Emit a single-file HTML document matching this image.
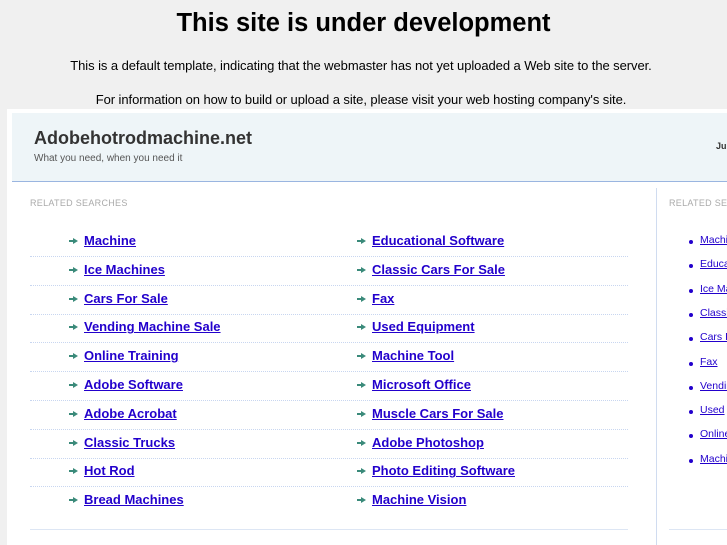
<!DOCTYPE html>
<html><head><meta charset="utf-8"><style>
html,body{margin:0;width:727px;height:545px;overflow:hidden}
body{background:#f0f0f0;font-family:"Liberation Sans",sans-serif;position:relative}
#wrap{position:absolute;left:0;top:0;width:727px;height:545px;overflow:hidden}
.a{position:absolute;white-space:nowrap}
h1{position:absolute;top:7px;left:0;width:727px;text-align:center;margin:0;font-size:25.5px;line-height:32px;color:#000}
.p{left:0;width:722px;text-align:center;font-size:13px;color:#000;letter-spacing:-0.07px}
#panel{position:absolute;left:7px;top:109px;width:720px;height:436px;background:#fff}
#hdr{position:absolute;left:12px;top:113px;width:715px;height:68px;background:#eef5f8;border-bottom:1px solid #9ab5e0}
.lab{font-size:9px;color:#aaa;letter-spacing:.3px}
.l{font-size:13px;font-weight:bold;color:#2200cc;text-decoration:underline}
.ar{width:0;height:0;border-left:5px solid #3a8a7a;border-top:3px solid transparent;border-bottom:3px solid transparent}
.ar:before{content:"";position:absolute;left:-9px;top:-1px;width:4px;height:2px;background:#3a8a7a}
.dot{position:absolute;left:30px;width:598px;border-top:1px dotted #c8d6f0;height:0}
.s{font-size:10.5px;color:#2200cc;text-decoration:underline}
.b{width:4px;height:4px;border-radius:2px;background:#2200cc}
</style></head><body><div id="wrap">
<h1>This site is under development</h1>
<div class="a p" style="top:58px">This is a default template, indicating that the webmaster has not yet uploaded a Web site to the server.</div>
<div class="a p" style="top:92px">For information on how to build or upload a site, please visit your web hosting company's site.</div>
<div id="panel"></div>
<div id="hdr"></div>
<div class="a" style="left:34px;top:128px;font-size:18px;font-weight:bold;color:#333">Adobehotrodmachine.net</div>
<div class="a" style="left:34px;top:153px;font-size:10px;color:#555">What you need, when you need it</div>
<div class="a" style="left:716px;top:141px;font-size:9px;font-weight:bold;color:#333">Ju</div>
<div class="a lab" style="left:30px;top:198px">RELATED SEARCHES</div>
<div class="a lab" style="left:669px;top:198px">RELATED SEARCHES</div>
<div class="a" style="left:656px;top:188px;width:1px;height:357px;background:#d0dcf0"></div>
<div class="a" style="left:30px;top:529px;width:598px;height:1px;background:#dde6f4"></div>
<div class="a" style="left:669px;top:529px;width:58px;height:1px;background:#dde6f4"></div>
<div id="rows"></div>
</div>
<script>
var L=["Machine","Ice Machines","Cars For Sale","Vending Machine Sale","Online Training","Adobe Software","Adobe Acrobat","Classic Trucks","Hot Rod","Bread Machines"];
var R=["Educational Software","Classic Cars For Sale","Fax","Used Equipment","Machine Tool","Microsoft Office","Muscle Cars For Sale","Adobe Photoshop","Photo Editing Software","Machine Vision"];
var S=["Machine","Educational","Ice Machines","Classic","Cars For","Fax","Vending","Used","Online","Machine"];
var h="";
for(var i=0;i<10;i++){var y=233+i*28.8;
h+='<div class="a ar" style="left:73px;top:'+(y+5)+'px"></div><div class="a l" style="left:84px;top:'+y+'px">'+L[i]+'</div>';
h+='<div class="a ar" style="left:361px;top:'+(y+5)+'px"></div><div class="a l" style="left:372px;top:'+y+'px">'+R[i]+'</div>';
if(i<9)h+='<div class="dot" style="top:'+(y+23)+'px"></div>';
var z=234+i*24.3;
h+='<div class="a b" style="left:689px;top:'+(z+6)+'px"></div><div class="a s" style="left:700px;top:'+z+'px">'+S[i]+'</div>';}
document.getElementById("rows").innerHTML=h;
</script>
</body></html>
